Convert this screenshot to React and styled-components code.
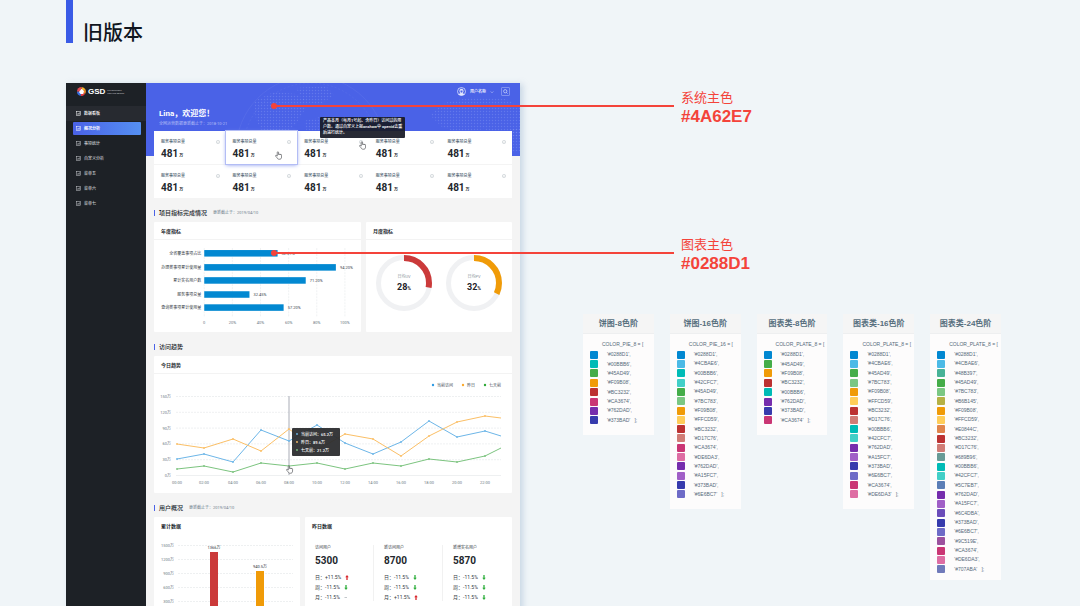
import React from "react";
import styled, { createGlobalStyle, css } from "styled-components";

const SANS = `Roboto, "Noto Sans CJK SC", sans-serif`;
const ARIAL = `"Liberation Sans", "Noto Sans CJK SC", sans-serif`;
const BRAND = "#4A62E7";
const CHART = "#0288D1";
const RED = "#F4433A";

const Global = createGlobalStyle`
  *, *::before, *::after { box-sizing: border-box; }
  body { margin: 0; background: #f0f5f8; font-family: ${SANS}; color: #23272d; }
  h1, h2, h3, p, ul, dl, dd, dt { margin: 0; padding: 0; }
  ul { list-style: none; }
  button { border: 0; background: none; padding: 0; font: inherit; color: inherit; }
  a { color: inherit; text-decoration: none; }
  svg { display: block; }
`;

const Page = styled.div`
  height: 100vh;
  display: flex;
  flex-direction: column;
  padding: 0 79px 0 66px;
  overflow: hidden;
`;

const PageHeader = styled.header`
  flex: none;
  display: flex;
  gap: 10px;
  height: 83px;
  &::before {
    content: "";
    width: 7px;
    height: 43px;
    background: #3a5be6;
  }
`;

const PageTitle = styled.h1`
  padding-top: 17px;
  font: 500 20px/30px "Noto Sans CJK SC", sans-serif;
  color: #11161f;
`;

const Columns = styled.main`
  flex: 1;
  display: grid;
  grid-template-columns: minmax(0, 454fr) minmax(0, 418fr);
  gap: 63px;
`;

const Dashboard = styled.section`
  display: grid;
  grid-template-columns: 80px minmax(0, 1fr);
  background: #f4f4f4;
  box-shadow: 3px 1px 6px rgba(130, 160, 195, 0.35);
`;

/* Sidebar */
const Sidebar = styled.aside`
  background: #1d2126;
  color: #c9ccd0;
`;

const Brand = styled.div`
  display: flex;
  align-items: center;
  gap: 2px;
  height: 17px;
  padding-left: 11px;
  margin-bottom: 6px;
  color: #fff;
  font: 700 8px/10px ${ARIAL};
`;

const BrandNote = styled.span`
  font-size: 2px;
  line-height: 3px;
  font-weight: 400;
  color: #c4c8ce;
`;

const NavItem = styled.a`
  display: flex;
  align-items: center;
  height: 15px;
  padding: 0 5px 0 7px;
  ${(p) => p.$open && css`background: #272a30; color: #fff; font-weight: 700;`}
`;

const NavInner = styled.span`
  flex: 1;
  display: flex;
  align-items: center;
  gap: 3px;
  height: 13px;
  padding-left: 3px;
  border-radius: 1px;
  font-size: 4px;
  line-height: 6px;
  font-weight: 500;
  ${(p) => p.$active && css`
    background: linear-gradient(90deg, #4a62e7, #5590f2);
    color: #fff;
    font-weight: 700;
  `}
`;

/* Main area */
const Content = styled.div`
  min-width: 0;
`;

const Hero = styled.header`
  position: relative;
  padding: 0 10px 29px 13px;
  background: ${BRAND};
  color: #fff;
`;

const HeroArt = styled.svg`
  position: absolute;
  inset: 0;
  width: 100%;
  height: 100%;
`;

const UserBar = styled.div`
  position: relative;
  display: flex;
  justify-content: flex-end;
  align-items: center;
  gap: 7px;
  height: 17px;
`;

const UserButton = styled.button`
  display: flex;
  align-items: center;
  gap: 4px;
  font-size: 4px;
  line-height: 6px;
  font-weight: 500;
`;

const SearchButton = styled.button`
  display: grid;
  place-items: center;
  width: 9px;
  height: 9px;
  border: 1px solid #7f91f0;
  border-radius: 1px;
`;

const Greeting = styled.h2`
  position: relative;
  margin-top: 8px;
  font-size: 8px;
  line-height: 12px;
  font-weight: 700;
`;

const HeroNote = styled.p`
  position: relative;
  margin-top: 1px;
  font-size: 4px;
  line-height: 6px;
  color: #b4bef6;
`;

const Body = styled.div`
  padding: 0 8px;
`;

const Stats = styled.dl`
  position: relative;
  display: grid;
  grid-template-columns: repeat(5, 1fr);
  grid-auto-rows: 33px;
  row-gap: 1px;
  margin-top: -25px;
  background: #f4f4f4;
  border-radius: 1px;
`;

const Stat = styled.div`
  position: relative;
  padding: 8px 6px 0 7px;
  background: #fff;
  box-shadow: ${(p) => (p.$active ? "0 0 0 1px #b3bdf5, 0 1px 4px #8898ee" : "none")};
  z-index: ${(p) => (p.$active ? 1 : 0)};
`;

const StatLabel = styled.dt`
  display: flex;
  justify-content: space-between;
  align-items: center;
  font-size: 4px;
  line-height: 6px;
  font-weight: 500;
  color: #4d6170;
`;

const BigNumber = styled.dd`
  margin-top: ${(p) => (p.$gap ? "4px" : "3px")};
  font-size: 10px;
  line-height: 12px;
  font-weight: 700;
  small { margin-left: 1px; font-size: 4px; }
`;

const Pointer = styled.svg`
  position: absolute;
  left: ${(p) => p.$left};
  top: ${(p) => p.$top};
  width: 7px;
  height: 9px;
`;

const HelpTip = styled.div`
  position: absolute;
  z-index: 2;
  left: 166px;
  top: -14px;
  padding: 1px 3px 2px;
  border-radius: 1px;
  background: rgba(24, 26, 38, 0.93);
  color: #fff;
  font-size: 4px;
  line-height: 6px;
  font-weight: 500;
  white-space: nowrap;
`;

const SectionTitle = styled.h2`
  display: flex;
  align-items: center;
  gap: 4px;
  margin: 11px 0 5px;
  font-size: 6px;
  line-height: 8px;
  font-weight: 500;
  &::before {
    content: "";
    width: 1px;
    height: 6px;
    background: ${BRAND};
  }
  small { margin-left: 2px; font-size: 4px; font-weight: 400; color: #6f808d; }
`;

const CardRow = styled.div`
  display: grid;
  grid-template-columns: ${(p) => p.$cols};
  gap: 5px;
`;

const Card = styled.article`
  min-width: 0;
  background: #fff;
  border-radius: 1px;
`;

const CardTitle = styled.h3`
  height: 18px;
  padding-left: 7px;
  border-bottom: 1px ${(p) => (p.$plain ? "solid #fff" : "solid #f3f3f3")};
  font-size: 5px;
  line-height: 18px;
  font-weight: 700;
`;

const Chart = styled.svg`
  width: 100%;
  overflow: visible;
  font-family: ${SANS};
  font-size: 4px;
  fill: #6c7983;
`;

const Users = styled.div`
  display: grid;
  grid-template-columns: repeat(3, 1fr);
  padding-top: 10px;
`;

const UserStat = styled.dl`
  padding-left: 10px;
  height: 56px;
  border-right: 1px solid ${(p) => (p.$last ? "#fff" : "#f1f1f1")};
`;

const UserLabel = styled.dt`
  font-size: 4px;
  line-height: 6px;
  color: #333a42;
`;

const Changes = styled.ul`
  margin-top: 5px;
`;

const Change = styled.li`
  display: flex;
  align-items: center;
  gap: 4px;
  font-size: 5px;
  line-height: 10px;
  color: #333a42;
`;

/* Notes and palettes */
const Side = styled.aside`
  padding-top: 6px;
`;

const Note = styled.div`
  position: relative;
  margin-bottom: ${(p) => p.$after}px;
  padding-left: 98px;
  color: ${RED};
  font: 13px/18px ${ARIAL};
  strong { display: block; font-size: 17px; line-height: 20px; }
  &::before {
    content: "";
    position: absolute;
    z-index: 3;
    left: -310px;
    top: 16px;
    width: 401px;
    height: 2px;
    background: ${RED};
  }
  &::after {
    content: "";
    position: absolute;
    z-index: 3;
    left: -312px;
    top: 14px;
    width: 6px;
    height: 6px;
    border-radius: 3px;
    background: ${RED};
  }
`;

const Palettes = styled.div`
  display: grid;
  grid-template-columns: repeat(5, minmax(0, 1fr));
  align-items: start;
  gap: 16px;
`;

const Palette = styled.section`
  background: #fdfcfc;
  padding-bottom: ${(p) => (p.$long ? 6 : 10)}px;
  font: 5px/7px ${ARIAL};
  color: #566a7a;
`;

const PaletteTitle = styled.h3`
  height: 20px;
  background: #f5f5f5;
  border-bottom: 1px solid #eeeff0;
  text-align: center;
  font: 700 8px/20px ${ARIAL};
  color: #566e7d;
`;

const PaletteName = styled.p`
  padding: 7px 0 2px 19px;
  white-space: nowrap;
`;

const Swatches = styled.ul`
  display: grid;
  grid-template-rows: repeat(${(p) => p.$n}, 1fr);
  height: ${(p) => Math.round((p.$n * 28) / 3)}px;
  padding-left: 7px;
`;

const Swatch = styled.li`
  display: flex;
  align-items: center;
  gap: 9px;
  white-space: pre;
  &::before {
    content: "";
    width: 8px;
    height: 8px;
    border-radius: 1px;
    background: ${(p) => p.$color};
  }
`;

const NavIcon = () => (
  <svg width="5" height="5" viewBox="0 0 10 10" fill="none" stroke="currentColor" strokeWidth="1">
    <rect x="0.8" y="0.8" width="8.4" height="8.4" />
    <path d="M3 7.2V5M5 7.2V4M7 7.2V2.8" />
  </svg>
);

const Info = () => (
  <svg width="4" height="4" viewBox="0 0 8 8" fill="none" stroke="#a7b0b8" strokeWidth="0.8">
    <circle cx="4" cy="4" r="3.3" />
    <path d="M4 3.5V6M4 2v.7" />
  </svg>
);

const HAND = "M4.5 10V3c0-2 2.6-2 2.6 0v4c0-1.5 2.2-1.5 2.2.3 0-1.4 2-1.3 2 .4 0-1 1.8-1 1.8.6v4c0 2.8-1.4 4.2-4.4 4.2-2.6 0-3.6-.9-4.7-3L1.3 10.3c-.8-1.5 1-2.4 2-1.2z";

const Hand = ({ left, top }) => (
  <Pointer $left={left} $top={top} viewBox="0 0 14 18">
    <path d={HAND} fill="#fff" stroke="#3a3d42" strokeWidth="1.2" />
  </Pointer>
);

const Arrow = ({ dir }) => {
  if (dir === "flat") return <svg width="4" height="5" viewBox="0 0 8 10"><path d="M1 5h5" stroke="#9aa2a8" strokeWidth="1.2" /></svg>;
  const up = dir === "up";
  return (
    <svg width="4" height="5" viewBox="0 0 8 10" fill={up ? "#d8262c" : "#2fae3c"}>
      <path d={up ? "M4 0L7.5 4.5H5.3V10H2.7V4.5H.5z" : "M4 10L.5 5.5H2.7V0H5.3V5.5H7.5z"} />
    </svg>
  );
};

const nav = ["数据看板", "概况分析", "事项统计", "自定义分析", "菜单五", "菜单六", "菜单七"];

const bars = [
  ["全省覆盖事项占比", 73, "52.21%", 13],
  ["办理类事项累计使用量", 131, "94.20%", 27],
  ["累计实名用户数", 101, "71.20%", 40],
  ["服务事项总量", 45, "32.45%", 54],
  ["查询类事项累计使用量", 79, "57.20%", 67],
];

const BarChart = () => (
  <Chart viewBox="0 0 206 92">
    {["0", "20%", "40%", "60%", "80%", "100%"].map((t, i) => (
      <g key={t}>
        <path d={`M${50 + i * 28} 8V76`} stroke="#e6e9eb" strokeWidth="0.6" strokeDasharray="2 1" />
        <text x={50 + i * 28} y="84" textAnchor="middle">{t}</text>
      </g>
    ))}
    {bars.map(([label, w, value, y]) => (
      <g key={label}>
        <text x="47" y={y + 1.5} textAnchor="end" fill="#2f363d">{label}</text>
        <rect x="50" y={y - 3} width={w} height="6.5" fill={CHART} />
        <text x={54 + w} y={y + 1.5} fill="#3d464e">{value}</text>
      </g>
    ))}
  </Chart>
);

const Donut = ({ x, value, color, label }) => (
  <g>
    <circle cx={x} cy="43" r="25.5" fill="none" stroke="#f0f1f3" strokeWidth="5" />
    <circle
      cx={x} cy="43" r="25" fill="none" stroke={color} strokeWidth="6" pathLength="100"
      strokeDasharray={`${value} 100`} transform={`rotate(-90 ${x} 43)`}
    />
    <text x={x} y="38" textAnchor="middle" fill="#8c949b">{label}</text>
    <text x={x} y="50" textAnchor="middle" fill="#1f2329" fontWeight="700" fontSize="9">
      {value}<tspan fontSize="5">%</tspan>
    </text>
  </g>
);

const xs = [23, 50, 79, 107, 135, 163, 191, 219, 247, 275, 303, 331, 347];
const series = [
  ["#6db6e8", [85, 80, 88, 56, 67, 51, 69, 80, 68, 47, 63, 57, 62]],
  ["#fbbf66", [70, 74, 65, 77, 55, 76, 60, 65, 82, 62, 48, 42, 44]],
  ["#7cc47f", [95, 92, 98, 89, 92, 89, 95, 89, 92, 85, 88, 82, 74]],
];

const LineChart = () => (
  <Chart viewBox="0 0 358 119">
    {[["#2f9be4", 279, "当前访问"], ["#fba92e", 309, "昨日"], ["#2ea836", 331, "七天前"]].map(([c, x, t]) => (
      <g key={t}>
        <circle cx={x} cy="11" r="1.2" fill={c} />
        <text x={x + 4} y="12.5" fill="#3d4a55">{t}</text>
      </g>
    ))}
    {["150万", "120万", "90万", "60万", "30万", "0万"].map((t, i) => (
      <g key={t}>
        <path d={`M22 ${22.5 + i * 15.8}H347`} stroke="#e3e6e8" strokeWidth="0.6" strokeDasharray={i < 5 ? "2 1" : "none"} />
        <text x="17" y={24 + i * 15.8} textAnchor="end">{t}</text>
      </g>
    ))}
    {xs.slice(0, 12).map((x, i) => (
      <text key={x} x={x} y="110" textAnchor="middle">{`${String(i * 2).padStart(2, "0")}:00`}</text>
    ))}
    <path d="M135 22V101" stroke="#a9acb6" strokeWidth="1" />
    {series.map(([c, ys]) => (
      <g key={c}>
        <polyline points={ys.map((y, i) => `${xs[i]},${y}`).join(" ")} fill="none" stroke={c} strokeWidth="1" />
        {ys.slice(0, 12).map((y, i) => <circle key={i} cx={xs[i]} cy={y} r="0.9" fill={c} />)}
      </g>
    ))}
    <rect x="138" y="54" width="48" height="28" rx="1" fill="#2a2c2e" fillOpacity="0.94" />
    {[["#6db6e8", "当前访问：65.2万"], ["#fbbf66", "昨日：89.6万"], ["#7cc47f", "七天前：21.2万"]].map(([c, t], i) => (
      <g key={t}>
        <circle cx="143" cy={60 + i * 8} r="0.9" fill={c} />
        <text x="147" y={61.5 + i * 8} fill="#fff" fontWeight="500">{t}</text>
      </g>
    ))}
    <path transform="translate(132 91) scale(0.5)" d={HAND} fill="#fff" stroke="#3a3d42" strokeWidth="1.2" />
  </Chart>
);

const ColumnChart = () => (
  <Chart viewBox="0 0 146 84">
    {["1500万", "1200万", "900万", "600万", "300万"].map((t, i) => (
      <g key={t}>
        <path d={`M24 ${10.5 + i * 14}H139`} stroke="#e3e6e8" strokeWidth="0.6" strokeDasharray="2 1" />
        <text x="20" y={12 + i * 14} textAnchor="end">{t}</text>
      </g>
    ))}
    <rect x="56" y="17" width="8" height="64" fill="#cb3a3a" />
    <rect x="102" y="36" width="8" height="45" fill="#f09b08" />
    <text x="60" y="14" textAnchor="middle" fill="#2f363d">1366万</text>
    <text x="106" y="33" textAnchor="middle" fill="#2f363d">940.5万</text>
  </Chart>
);

const HeroBackdrop = () => (
  <HeroArt viewBox="0 0 374 73" preserveAspectRatio="xMidYMid slice" aria-hidden="true">
    <defs>
      <pattern id="dots" width="3" height="3" patternUnits="userSpaceOnUse">
        <circle cx="1.5" cy="1.5" r="0.7" fill="#8fa0f5" fillOpacity="0.35" />
      </pattern>
    </defs>
    <g fill="none" stroke="#7f91f0" strokeOpacity="0.35" strokeWidth="0.5">
      <circle cx="165" cy="68" r="75" />
      <circle cx="165" cy="68" r="68" strokeDasharray="2 2" />
    </g>
    <g fill="url(#dots)">
      <path d="M108 18l20-9 22 2 14 8-8 12-6 10-14 12-18-2-8-14z" />
      <path d="M150 5l30-2 8 9-14 10-16-4z" />
      <path d="M158 38l16-4 14 10-6 24h-16z" />
      <path d="M284 32l14-12 28-6 34 2 14 8v30l-16 2-20-10-24 4-18-6z" />
      <path d="M352 50l22-6v24l-14 2z" />
    </g>
  </HeroArt>
);

const users = [
  ["访问用户", "5300", [["日", "+11.5%", "up"], ["周", "-11.5%", "down"], ["月", "-11.5%", "flat"]]],
  ["新访问用户", "8700", [["日", "-11.5%", "down"], ["周", "-11.5%", "down"], ["月", "+11.5%", "up"]]],
  ["新增实名用户", "5870", [["日", "-11.5%", "down"], ["周", "-11.5%", "down"], ["月", "-11.5%", "down"]]],
];

const palettes = [
  ["饼图-8色阶", "COLOR_PIE_8", "0288D1, 00BBB6, 45AD49, F09B08, BC3232, CA3674, 762DAD, 373BAD"],
  ["饼图-16色阶", "COLOR_PIE_16", "0288D1, 4CBAE6, 00BBB6, 42CFC7, 45AD49, 7BC783, F09B08, FFCD59, BC3232, D17C76, CA3674, DE6DA3, 762DAD, A15FC7, 373BAD, 6E6BC7"],
  ["图表类-8色阶", "COLOR_PLATE_8", "0288D1, 45AD49, F09B08, BC3232, 00BBB6, 762DAD, 373BAD, CA3674"],
  ["图表类-16色阶", "COLOR_PLATE_8", "0288D1, 4CBAE6, 45AD49, 7BC783, F09B08, FFCD59, BC3232, D17C76, 00BBB6, 42CFC7, 762DAD, A15FC7, 373BAD, 6E6BC7, CA3674, DE6DA3"],
  ["图表类-24色阶", "COLOR_PLATE_8", "0288D1, 4CBAE6, 48B397, 45AD49, 7BC783, B6B145, F09B08, FFCD59, E0844C, BC3232, D17C76, 689B96, 00BBB6, 42CFC7, 5C7EB7, 762DAD, A15FC7, 6C4DBA, 373BAD, 6E6BC7, 9C519E, CA3674, DE6DA3, 707ABA"],
];

export default function App() {
  return (
    <Page>
      <Global />
      <PageHeader>
        <PageTitle>旧版本</PageTitle>
      </PageHeader>
      <Columns>
        <Dashboard>
          <Sidebar>
            <Brand>
              <svg width="9" height="9" viewBox="0 0 18 18">
                <path d="M9 9V0a9 9 0 0 1 8 5z" fill="#f7b52c" />
                <path d="M9 9l8-4a9 9 0 0 1-1 9z" fill="#f08a24" />
                <path d="M9 9l7 5a9 9 0 0 1-9 4z" fill="#e2383f" />
                <path d="M9 9l-2 9a9 9 0 0 1-7-9z" fill="#3b6fe0" />
                <path d="M9 9H0a9 9 0 0 1 9-9z" fill="#e24a52" />
                <path d="M9 3.500l5 4.500-1.500 6H7L4 10z" fill="#fff" />
              </svg>
              GSD
              <BrandNote>GOVERNMENT<br />SERVICE DESIGN</BrandNote>
            </Brand>
            <nav>
              {nav.map((t, i) => (
                <NavItem key={t} href="#" $open={i === 0}>
                  <NavInner $active={i === 1}>
                    <NavIcon />
                    {t}
                  </NavInner>
                </NavItem>
              ))}
            </nav>
          </Sidebar>
          <Content>
            <Hero>
              <HeroBackdrop />
              <UserBar>
                <UserButton>
                  <svg width="9" height="9" viewBox="0 0 18 18">
                    <circle cx="9" cy="9" r="8" fill="#4a62e7" stroke="#e3e8fd" strokeWidth="1.5" />
                    <path d="M9 3.5c5 0 5 7 2 8.500l4 2.500a8 8 0 0 1-12 0L7 12C4 10.500 4 3.500 9 3.500z" fill="#e3e8fd" />
                    <path d="M7 7h4v3l-2 1.500L7 10z" fill="#4a62e7" />
                  </svg>
                  用户名称
                  <svg width="4" height="4" viewBox="0 0 8 8" fill="none" stroke="#dfe4fd"><path d="M1.500 3L4 5.500 6.500 3" /></svg>
                </UserButton>
                <SearchButton aria-label="搜索">
                  <svg width="5" height="5" viewBox="0 0 10 10" fill="none" stroke="#dfe4fd" strokeWidth="1.3">
                    <circle cx="4.5" cy="4.5" r="3.3" /><path d="M7 7l2.200 2.200" />
                  </svg>
                </SearchButton>
              </UserBar>
              <Greeting>Lina，欢迎您！</Greeting>
              <HeroNote>全网运营数据更新截止于：2018-10-21</HeroNote>
            </Hero>
            <Body>
              <Stats>
                {Array.from({ length: 10 }, (_, i) => (
                  <Stat key={i} $active={i === 1}>
                    <StatLabel>服务事项总量<Info /></StatLabel>
                    <BigNumber>481<small>万</small></BigNumber>
                    {i === 1 && <Hand left="49px" top="20px" />}
                    {i === 2 && <Hand left="62px" top="10px" />}
                  </Stat>
                ))}
                <HelpTip role="tooltip">
                  产品本月（每月1号起、含昨日）访问过的用<br />
                  户数。通过自定义上报onshow中 openid去重<br />
                  后进行统计。
                </HelpTip>
              </Stats>

              <SectionTitle>项目指标完成情况<small>更新截止于：2019/04/10</small></SectionTitle>
              <CardRow $cols="minmax(0, 207fr) minmax(0, 146fr)">
                <Card>
                  <CardTitle>年度指标</CardTitle>
                  <BarChart />
                </Card>
                <Card>
                  <CardTitle>月度指标</CardTitle>
                  <Chart viewBox="0 0 146 92">
                    <Donut x={38} value={28} color="#cb3a3a" label="日均UV" />
                    <Donut x={108} value={32} color="#f09b08" label="日均PV" />
                  </Chart>
                </Card>
              </CardRow>

              <SectionTitle>访问趋势</SectionTitle>
              <Card>
                <CardTitle>今日趋势</CardTitle>
                <LineChart />
              </Card>

              <SectionTitle>用户概况<small>更新截止于：2019/04/10</small></SectionTitle>
              <CardRow $cols="minmax(0, 146fr) minmax(0, 207fr)">
                <Card>
                  <CardTitle $plain>累计数据</CardTitle>
                  <ColumnChart />
                </Card>
                <Card>
                  <CardTitle $plain>昨日数据</CardTitle>
                  <Users>
                    {users.map(([label, total, rows], i) => (
                      <UserStat key={label} $last={i === 2}>
                        <UserLabel>{label}</UserLabel>
                        <BigNumber $gap>{total}</BigNumber>
                        <dd>
                          <Changes>
                            {rows.map(([d, v, dir]) => (
                              <Change key={d}>{d}：{v}<Arrow dir={dir} /></Change>
                            ))}
                          </Changes>
                        </dd>
                      </UserStat>
                    ))}
                  </Users>
                </Card>
              </CardRow>
            </Body>
          </Content>
        </Dashboard>

        <Side>
          <Note $after={109}>系统主色<strong>#4A62E7</strong></Note>
          <Note $after={40}>图表主色<strong>#0288D1</strong></Note>
          <Palettes>
            {palettes.map(([title, name, list]) => {
              const colors = list.split(", ");
              return (
                <Palette key={title} $long={colors.length > 16}>
                  <PaletteTitle>{title}</PaletteTitle>
                  <PaletteName>{name} = [</PaletteName>
                  <Swatches $n={colors.length}>
                    {colors.map((c, i) => (
                      <Swatch key={c} $color={`#${c}`}>{`'#${c}'${i < colors.length - 1 ? "," : "   ];"}`}</Swatch>
                    ))}
                  </Swatches>
                </Palette>
              );
            })}
          </Palettes>
        </Side>
      </Columns>
    </Page>
  );
}
